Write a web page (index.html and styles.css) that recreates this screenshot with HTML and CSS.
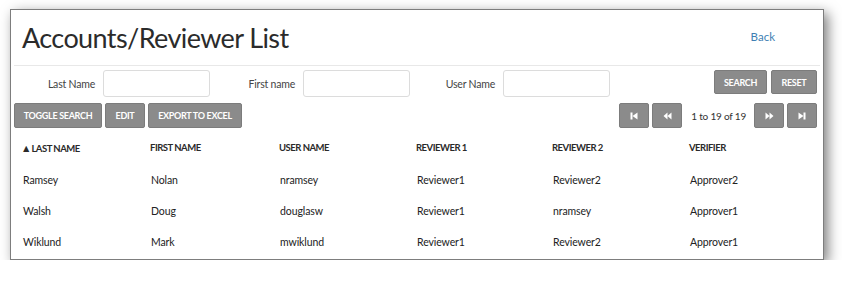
FILE: index.html
```html
<!DOCTYPE html>
<html>
<head>
<meta charset="utf-8">
<link rel="stylesheet" href="styles.css">
</head>
<body>
<div class="card">
  <div class="head">
    <h1 class="title">Accounts/Reviewer List</h1>
    <a class="back" href="#">Back</a>
  </div>
  <div class="search-row">
    <div class="field"><label>Last Name</label><input type="text"></div>
    <div class="field"><label>First name</label><input type="text"></div>
    <div class="field"><label>User Name</label><input type="text"></div>
    <div class="actions">
      <button class="btn btn-search">SEARCH</button>
      <button class="btn btn-reset">RESET</button>
    </div>
  </div>
  <div class="tool-row">
    <div class="tools">
      <button class="btn btn-toggle">TOGGLE SEARCH</button>
      <button class="btn btn-edit">EDIT</button>
      <button class="btn btn-export">EXPORT TO EXCEL</button>
    </div>
    <div class="pager">
      <button class="btn pbtn"><svg width="8" height="8" viewBox="0 0 8 8"><rect x="0.5" y="0.5" width="2" height="7" fill="#fff"/><path d="M7.5 0.5 L2.5 4 L7.5 7.5 Z" fill="#fff"/></svg></button>
      <button class="btn pbtn"><svg width="9" height="8" viewBox="0 0 9 8"><path d="M4.5 0.5 L0.5 4 L4.5 7.5 Z M8.5 0.5 L4.5 4 L8.5 7.5 Z" fill="#fff"/></svg></button>
      <span class="count">1 to 19 of 19</span>
      <button class="btn pbtn"><svg width="9" height="8" viewBox="0 0 9 8"><path d="M0.5 0.5 L4.5 4 L0.5 7.5 Z M4.5 0.5 L8.5 4 L4.5 7.5 Z" fill="#fff"/></svg></button>
      <button class="btn pbtn"><svg width="8" height="8" viewBox="0 0 8 8"><path d="M0.5 0.5 L5.5 4 L0.5 7.5 Z" fill="#fff"/><rect x="5.5" y="0.5" width="2" height="7" fill="#fff"/></svg></button>
    </div>
  </div>
  <table class="grid">
    <colgroup>
      <col class="c1"><col class="c2"><col class="c3"><col class="c4"><col class="c5"><col class="c6">
    </colgroup>
    <thead>
      <tr><th><span class="sort">&#9650;</span>LAST NAME</th><th>FIRST NAME</th><th>USER NAME</th><th>REVIEWER 1</th><th>REVIEWER 2</th><th>VERIFIER</th></tr>
    </thead>
    <tbody>
      <tr><td>Ramsey</td><td>Nolan</td><td>nramsey</td><td>Reviewer1</td><td>Reviewer2</td><td>Approver2</td></tr>
      <tr><td>Walsh</td><td>Doug</td><td>douglasw</td><td>Reviewer1</td><td>nramsey</td><td>Approver1</td></tr>
      <tr><td>Wiklund</td><td>Mark</td><td>mwiklund</td><td>Reviewer1</td><td>Reviewer2</td><td>Approver1</td></tr>
    </tbody>
  </table>
</div>
</body>
</html>
```

FILE: styles.css
```css
* { box-sizing: border-box; }
html, body { margin: 0; padding: 0; background: #fff; }
body {
  font-family: Lato, "Open Sans", sans-serif;
  color: #333;
  padding: 9px 0 0 10px;
}
.card {
  width: 814px;
  height: 251px;
  border: 1px solid #7d7d7d;
  background: #fff;
  box-shadow: 4px 4px 12px rgba(0,0,0,0.5);
}
.head {
  display: flex;
  align-items: center;
  justify-content: space-between;
  height: 56px;
  margin: 0 3px;
  padding-left: 8px;
  padding-right: 45px;
  border-bottom: 1px solid #e8e8e8;
}
.title {
  margin: 0;
  font-size: 27px;
  font-weight: 400;
  color: #2b2b2b;
  letter-spacing: -0.6px;
}
.back {
  font-size: 11.5px;
  color: #3f7fb3;
  text-decoration: none;
  margin-top: -3px;
}
.search-row {
  display: flex;
  align-items: flex-start;
  margin-top: 4px;
  padding-right: 6px;
}
.field {
  display: flex;
  align-items: center;
  width: 200px;
}
.field label {
  width: 92px;
  flex: none;
  text-align: right;
  padding-right: 8px;
  font-size: 10.5px;
  letter-spacing: -0.2px;
  color: #444;
}
.field input {
  width: 107px;
  flex: none;
  height: 27px;
  border: 1px solid #dcdcdc;
  border-radius: 3px;
  background: #fff;
  margin: 0;
  padding: 0;
}
.actions {
  margin-left: auto;
  display: flex;
  gap: 4px;
}
.btn {
  font-family: Lato, "Open Sans", sans-serif;
  font-weight: 700;
  font-size: 9px;
  letter-spacing: -0.3px;
  color: #fff;
  background: #8b8b8b;
  border: 1px solid #7c7c7c;
  border-radius: 2px;
  padding: 0;
  margin: 0;
  height: 24px;
  display: inline-flex;
  align-items: center;
  justify-content: center;
}
.btn-search { width: 53px; }
.btn-reset { width: 46px; }
.tool-row {
  display: flex;
  justify-content: space-between;
  align-items: center;
  margin-top: 6px;
  padding: 0 6px 0 3px;
}
.tools { display: flex; gap: 3px; }
.tools .btn { height: 25px; }
.btn-toggle { width: 88px; }
.btn-edit { width: 40px; }
.btn-export { width: 94px; }
.pager { display: flex; align-items: center; gap: 3px; }
.pbtn { width: 30px; height: 25px; }
.count {
  font-size: 10px;
  letter-spacing: -0.2px;
  color: #333;
  padding: 0 5px 0 6px;
}
.grid {
  border-collapse: collapse;
  margin-left: 3px;
  width: 803px;
  table-layout: fixed;
}
.c1 { width: 128px; }
.c2 { width: 129px; }
.c3 { width: 137px; }
.c4 { width: 136px; }
.c5 { width: 137px; }
.c6 { width: 136px; }
.grid th {
  text-align: left;
  font-size: 9.5px;
  letter-spacing: -0.5px;
  font-weight: 700;
  color: #2a2a2a;
  height: 36px;
  padding: 3px 0 0 8px;
  vertical-align: middle;
}
.sort { font-size: 10.5px; margin-left: -1px; letter-spacing: 0; }
.grid td {
  font-size: 10.5px;
  letter-spacing: -0.1px;
  color: #222;
  height: 31px;
  padding: 0 0 0 9px;
  vertical-align: middle;
}
```
